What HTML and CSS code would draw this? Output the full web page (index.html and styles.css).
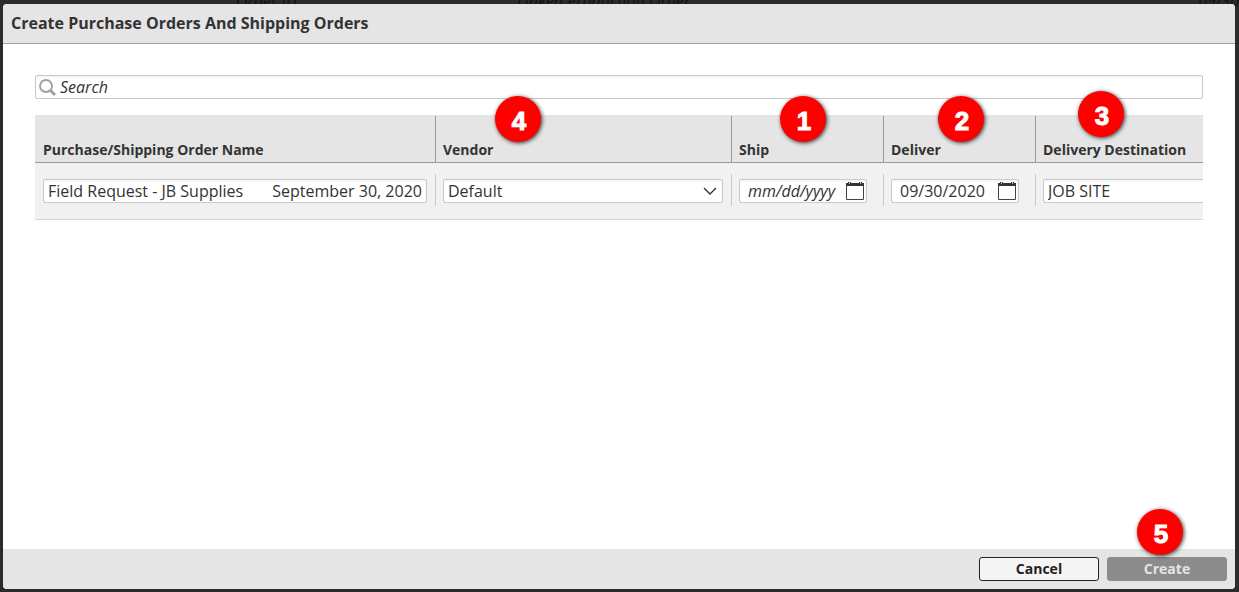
FILE: index.html
```html
<!DOCTYPE html>
<html lang="en">
<head>
    <meta charset="UTF-8">
    <meta name="viewport" content="width=device-width, initial-scale=1.0">
    <title>Create Purchase Orders And Shipping Orders</title>
    <link rel="stylesheet" href="styles.css">
</head>
<body>
    <!-- dimmed page behind the dialog -->
    <div class="backdrop" aria-hidden="true">
        <span class="behind behind-id">Order ID</span>
        <span class="behind behind-linked">Linked Production Order</span>
        <span class="behind behind-date">09/30</span>
    </div>

    <div class="dialog" role="dialog" aria-labelledby="dialog-title">
        <header class="dialog-header">
            <h1 id="dialog-title">Create Purchase Orders And Shipping Orders</h1>
        </header>

        <main class="dialog-body">
            <div class="search">
                <svg class="search-icon" viewBox="0 0 18 18" width="18" height="18" aria-hidden="true">
                    <circle cx="7" cy="7" r="6" fill="none" stroke="#a0a0a0" stroke-width="1.8"/>
                    <path d="M11 11 L16 16" stroke="#a0a0a0" stroke-width="3"/>
                </svg>
                <input class="field search-field" type="text" placeholder="Search" aria-label="Search">
            </div>

            <div class="table-wrap">
                <table class="orders">
                    <colgroup>
                        <col class="col-name">
                        <col class="col-vendor">
                        <col class="col-date">
                        <col class="col-date">
                        <col class="col-destination">
                    </colgroup>
                    <thead>
                        <tr>
                            <th id="h-name" scope="col"><div class="head">Purchase/Shipping Order Name</div></th>
                            <th id="h-vendor" scope="col"><div class="head">Vendor</div><span class="badge badge-4">4</span></th>
                            <th id="h-ship" scope="col"><div class="head">Ship</div><span class="badge badge-1">1</span></th>
                            <th id="h-deliver" scope="col"><div class="head">Deliver</div><span class="badge badge-2">2</span></th>
                            <th id="h-destination" scope="col"><div class="head">Delivery Destination</div><span class="badge badge-3">3</span></th>
                        </tr>
                    </thead>
                    <tbody>
                        <tr>
                            <td>
                                <div class="cell">
                                    <input class="field" type="text" aria-labelledby="h-name" value="Field Request - JB Supplies       September 30, 2020">
                                </div>
                            </td>
                            <td>
                                <div class="cell">
                                    <select class="field" aria-labelledby="h-vendor">
                                        <option>Default</option>
                                    </select>
                                    <svg class="chevron" viewBox="0 0 14 8" width="14" height="8" aria-hidden="true">
                                        <path d="M1 1 L7 7 L13 1" fill="none" stroke="#333" stroke-width="1.4"/>
                                    </svg>
                                </div>
                            </td>
                            <td>
                                <div class="cell date-cell">
                                    <input class="field date-field" type="text" placeholder="mm/dd/yyyy" aria-labelledby="h-ship">
                                    <button class="calendar" type="button" aria-label="Pick ship date">
                                        <svg viewBox="0 0 18 18" width="18" height="18">
                                            <path d="M0.5 2 V17.5 H17.5 V2" fill="#fff" stroke="#444"/>
                                            <path d="M0 1 H2 V0 H5 V1 H13 V0 H16 V1 H18 V4 H0 Z" fill="#333"/>
                                            <path d="M3 0 H4 V2 H3 Z M14 0 H15 V2 H14 Z" fill="#bbb"/>
                                        </svg>
                                    </button>
                                </div>
                            </td>
                            <td>
                                <div class="cell date-cell">
                                    <input class="field date-field" type="text" placeholder="mm/dd/yyyy" value="09/30/2020" aria-labelledby="h-deliver">
                                    <button class="calendar" type="button" aria-label="Pick delivery date">
                                        <svg viewBox="0 0 18 18" width="18" height="18">
                                            <path d="M0.5 2 V17.5 H17.5 V2" fill="#fff" stroke="#444"/>
                                            <path d="M0 1 H2 V0 H5 V1 H13 V0 H16 V1 H18 V4 H0 Z" fill="#333"/>
                                            <path d="M3 0 H4 V2 H3 Z M14 0 H15 V2 H14 Z" fill="#bbb"/>
                                        </svg>
                                    </button>
                                </div>
                            </td>
                            <td>
                                <div class="cell">
                                    <input class="field" type="text" value="JOB SITE" aria-labelledby="h-destination">
                                </div>
                            </td>
                        </tr>
                    </tbody>
                </table>
            </div>
        </main>

        <footer class="dialog-footer">
            <button class="btn" type="button">Cancel</button>
            <button class="btn btn-disabled" type="button" disabled>Create</button>
            <span class="badge badge-5">5</span>
        </footer>
    </div>
</body>
</html>
```

FILE: styles.css
```css
* {
    box-sizing: border-box;
}
body {
    margin: 0;
    height: 100vh;
    overflow: hidden;
    background-color: #2b2b2b;
    color: #333;
    font-family: "Open Sans", "Noto Sans", sans-serif;
    font-size: 16px;
}

/* page behind */
.behind {
    position: absolute;
    top: -10px;
    color: #111;
    font-style: italic;
    line-height: 22px;
    white-space: nowrap;
}
.behind-id {
    left: 236px;
}
.behind-linked {
    left: 517px;
}
.behind-date {
    right: 0;
}

/* dialog */
.dialog {
    position: fixed;
    top: 4px;
    right: 4px;
    bottom: 3px;
    left: 3px;
    display: flex;
    flex-direction: column;
    background-color: #fff;
    border-radius: 4px;
}
.dialog-header {
    padding: 8px;
    background-color: #e5e5e5;
    border-bottom: 1px solid #a0a0a0;
    border-radius: 4px 4px 0 0;
}
.dialog-header h1 {
    margin: 0;
    font-size: 16px;
    font-weight: 700;
    line-height: 23px;
}
.dialog-body {
    flex: 1;
    padding: 31px 32px;
}
.dialog-footer {
    position: relative;
    display: flex;
    justify-content: flex-end;
    gap: 8px;
    padding: 8px;
    background-color: #e5e5e5;
    border-radius: 0 0 4px 4px;
}

/* fields */
.field {
    display: block;
    width: 100%;
    height: 24px;
    margin: 0;
    padding: 0 4px;
    border: 1px solid #c8c8c8;
    border-radius: 2px;
    background-color: #fff;
    box-shadow: inset 0 2px 2px rgba(0, 0, 0, 0.04);
    color: #333;
    font-family: inherit;
    font-size: 16px;
    appearance: none;
}
.field::placeholder {
    color: #333;
    font-style: italic;
    opacity: 1;
}
.search {
    position: relative;
    margin-bottom: 16px;
}
.search-field {
    padding-left: 24px;
}
.search-icon {
    position: absolute;
    top: 4px;
    left: 4px;
}
.date-field {
    padding: 0 8px;
}

/* table */
.table-wrap {
    overflow-x: clip;
}
.orders {
    width: 1296px;
    table-layout: fixed;
    border-collapse: separate;
    border-spacing: 0;
}
.col-name {
    width: 400px;
}
.col-vendor,
.col-destination {
    width: 296px;
}
.col-date {
    width: 152px;
}
.orders th {
    position: relative;
    padding: 1px 0 0;
    background-color: #e5e5e5;
    border-bottom: 1px solid #999;
    text-align: left;
}
.head {
    display: flex;
    align-items: flex-end;
    height: 46px;
    padding: 0 7px 2px;
    border-left: 1px solid #999;
    font-size: 14px;
    font-weight: 700;
    line-height: 20px;
}
.orders td {
    padding: 11px 0 13px;
    background-color: #f1f1f1;
    border-bottom: 1px solid #d8d8d8;
}
.cell {
    position: relative;
    height: 32px;
    padding: 5px 8px 0 7px;
    border-left: 1px solid #c8c8c8;
}
.date-cell {
    padding-right: 16px;
}
th:first-child .head,
td:first-child .cell {
    border-left-color: transparent;
}
.chevron {
    position: absolute;
    top: 13px;
    right: 14px;
    pointer-events: none;
}
.calendar {
    position: absolute;
    top: 8px;
    right: 19px;
    width: 18px;
    height: 18px;
    padding: 0;
    border: none;
    background: none;
    cursor: pointer;
}
.calendar svg {
    display: block;
}

/* buttons */
.btn {
    width: 120px;
    height: 24px;
    padding: 0;
    border: 1px solid #222;
    border-radius: 3px;
    background-color: #f5f5f5;
    color: #222;
    font-family: inherit;
    font-size: 14px;
    font-weight: 700;
    line-height: 20px;
}
.btn-disabled {
    border-color: #8c8c8c;
    background-color: #8c8c8c;
    color: #e5e5e5;
}

/* numbered step markers */
.badge {
    position: absolute;
    width: 46px;
    height: 46px;
    padding-left: 2px;
    border-radius: 50%;
    background-color: #f00;
    box-shadow: 1px 1px 4px rgba(0, 0, 0, 0.8);
    color: #fff;
    font-family: "Liberation Sans", Arial, sans-serif;
    font-size: 26px;
    font-weight: bold;
    line-height: 50px;
    text-align: center;
    -webkit-text-stroke: 1px #fff;
}
.badge-4 {
    top: -19px;
    left: 60px;
}
.badge-1 {
    top: -19px;
    left: 49px;
}
.badge-2 {
    top: -19px;
    left: 55px;
}
.badge-3 {
    top: -24px;
    left: 43px;
}
.badge-5 {
    top: -40px;
    right: 52px;
}
```
